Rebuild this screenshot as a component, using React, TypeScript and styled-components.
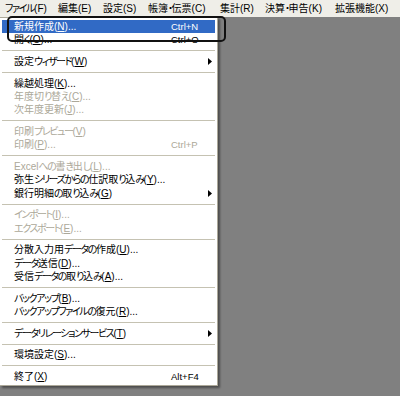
import React from "react";
import styled, { createGlobalStyle } from "styled-components";

const GlobalStyle = createGlobalStyle`
  html, body {
    margin: 0;
    padding: 0;
    background: #808080;
  }
  body {
    font-family: "Liberation Sans", "Noto Sans CJK JP", sans-serif;
  }
`;

const Screen = styled.div`
  position: relative;
  width: 400px;
  height: 396px;
  overflow: hidden;
  background: #808080;
  font-size: 10px;
  font-feature-settings: "palt";
`;

const MenuBar = styled.div`
  display: flex;
  align-items: center;
  height: 17px;
  padding-left: 5px;
  background: #efeee8;
  color: #000;
  white-space: nowrap;
`;

const BarItem = styled.div<{ $w: number }>`
  flex: 0 0 ${(p) => p.$w}px;
  line-height: 17px;
`;

const Workspace = styled.div`
  display: flex;
  align-items: flex-start;
`;

const Dropdown = styled.div`
  box-sizing: border-box;
  width: 218px;
  padding: 2px;
  background: #ffffff;
  border: 1px solid #aca899;
  border-left: none;
  box-shadow: 2px 2px 2px rgba(0, 0, 0, 0.4);
`;

const Row = styled.div<{ $active?: boolean; $disabled?: boolean }>`
  display: grid;
  grid-template-columns: 157px 1fr 8px;
  align-items: center;
  height: 13.4px;
  padding: 0 3px 0 12px;
  line-height: 13.4px;
  white-space: nowrap;
  background: ${(p) => (p.$active ? "#316ac5" : "transparent")};
  color: ${(p) => (p.$active ? "#ffffff" : p.$disabled ? "#aca899" : "#000000")};
`;

/* kana in the original UI font are proportional and narrower than kanji */
const Kana = styled.span`
  letter-spacing: -1.4px;
`;

const Shortcut = styled.span`
  justify-self: start;
  font-size: 9.5px;
`;

const ArrowCell = styled.span`
  display: flex;
  justify-content: flex-end;
  align-items: center;
`;

const Separator = styled.div`
  display: flex;
  align-items: center;
  height: 8.2px;

  &::before {
    content: "";
    flex: 1;
    height: 1px;
    background: #c5c2b2;
  }
`;

const Annotation = styled.div`
  position: absolute;
  left: 7px;
  top: 16px;
  width: 219px;
  height: 26px;
  box-sizing: border-box;
  border: 2px solid #111;
  border-radius: 5px;
  pointer-events: none;
`;

type Item =
  | { sep: true }
  | {
      sep?: false;
      label: string;
      key: string;
      dots?: boolean;
      shortcut?: string;
      sub?: boolean;
      disabled?: boolean;
      active?: boolean;
    };

const items: Item[] = [
  { label: "新規作成", key: "N", dots: true, shortcut: "Ctrl+N", active: true },
  { label: "開く", key: "O", dots: true, shortcut: "Ctrl+O" },
  { sep: true },
  { label: "設定ウィザード", key: "W", sub: true },
  { sep: true },
  { label: "繰越処理", key: "K", dots: true },
  { label: "年度切り替え", key: "C", dots: true, disabled: true },
  { label: "次年度更新", key: "J", dots: true, disabled: true },
  { sep: true },
  { label: "印刷プレビュー", key: "V", disabled: true },
  { label: "印刷", key: "P", dots: true, shortcut: "Ctrl+P", disabled: true },
  { sep: true },
  { label: "Excelへの書き出し", key: "L", dots: true, disabled: true },
  { label: "弥生シリーズからの仕訳取り込み", key: "Y", dots: true },
  { label: "銀行明細の取り込み", key: "G", sub: true },
  { sep: true },
  { label: "インポート", key: "I", dots: true, disabled: true },
  { label: "エクスポート", key: "E", dots: true, disabled: true },
  { sep: true },
  { label: "分散入力用データの作成", key: "U", dots: true },
  { label: "データ送信", key: "D", dots: true },
  { label: "受信データの取り込み", key: "A", dots: true },
  { sep: true },
  { label: "バックアップ", key: "B", dots: true },
  { label: "バックアップファイルの復元", key: "R", dots: true },
  { sep: true },
  { label: "データリレーションサービス", key: "T", sub: true },
  { sep: true },
  { label: "環境設定", key: "S", dots: true },
  { sep: true },
  { label: "終了", key: "X", shortcut: "Alt+F4" },
];

const barItems = [
  { label: "ファイル", key: "F", w: 53 },
  { label: "編集", key: "E", w: 45 },
  { label: "設定", key: "S", w: 45 },
  { label: "帳簿・伝票", key: "C", w: 72 },
  { label: "集計", key: "R", w: 45 },
  { label: "決算・申告", key: "K", w: 70 },
  { label: "拡張機能", key: "X", w: 60 },
];

const Label = ({ text }: { text: string }) => (
  <>
    {text
      .split(/([\u3040-\u30ff]+)/)
      .filter(Boolean)
      .map((part, i) =>
        /[\u3040-\u30ff]/.test(part) ? <Kana key={i}>{part}</Kana> : <span key={i}>{part}</span>
      )}
  </>
);

const SubArrow = ({ color }: { color: string }) => (
  <svg width="4" height="7" viewBox="0 0 4 7">
    <polygon points="0,0 4,3.5 0,7" fill={color} />
  </svg>
);

export default function App() {
  return (
    <Screen>
      <GlobalStyle />
      <MenuBar>
        {barItems.map((b) => (
          <BarItem key={b.key} $w={b.w}>
            <Label text={b.label} />({b.key})
          </BarItem>
        ))}
      </MenuBar>
      <Workspace>
        <Dropdown>
          {items.map((it, i) =>
            it.sep ? (
              <Separator key={i} />
            ) : (
              <Row key={i} $active={it.active} $disabled={it.disabled}>
                <span>
                  <Label text={it.label} />(<u>{it.key}</u>){it.dots ? "..." : ""}
                </span>
                <Shortcut>{it.shortcut}</Shortcut>
                <ArrowCell>{it.sub && <SubArrow color="#000" />}</ArrowCell>
              </Row>
            )
          )}
        </Dropdown>
      </Workspace>
      <Annotation />
    </Screen>
  );
}
